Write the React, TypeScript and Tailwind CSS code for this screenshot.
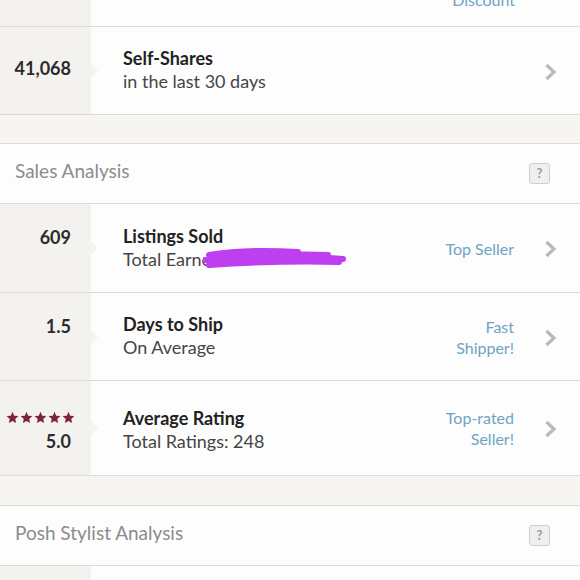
import React from 'react';

const Chevron = () => (
  <svg width="13" height="18" viewBox="0 0 13 18" className="shrink-0">
    <polyline points="2.5,2 10,9 2.5,16" fill="none" stroke="#b9b9b9" strokeWidth="3.2" strokeLinejoin="miter" />
  </svg>
);

const Star = () => (
  <svg width="13" height="13" viewBox="0 0 24 24">
    <path d="M12 1.5l3.1 7.2 7.8.7-5.9 5.2 1.8 7.7L12 18.3l-6.8 4 1.8-7.7-5.9-5.2 7.8-.7z" fill="#7d2535" />
  </svg>
);

const Help = () => (
  <div className="w-[21px] h-[21px] rounded-[3px] border border-[#cfcfcf] bg-[#efefef] flex items-center justify-center text-[13px] font-bold text-[#9a9a9a] leading-none">
    ?
  </div>
);

type RowProps = {
  left: React.ReactNode;
  title: string;
  sub: React.ReactNode;
  badge?: string[];
  h: string;
  pad?: string;
};

function StatRow({ left, title, sub, badge, h, pad = '' }: RowProps) {
  return (
    <div className={`flex bg-[#fdfdfd] border-b border-[#dedad7] ${h}`}>
      <div className="relative w-[91px] shrink-0 bg-[#f4f2ef] flex flex-col items-end justify-center pr-[20px]">
        {left}
        {/* little notch pointing into the row */}
        <div className="absolute right-[-7px] top-1/2 -translate-y-1/2 w-0 h-0 border-y-[7px] border-y-transparent border-l-[7px] border-l-[#f6f4f2]" />
      </div>
      <div className={`flex-1 flex flex-col justify-center pl-[32px] ${pad}`}>
        <p className="text-[18px] font-bold text-[#222] leading-[23px]">{title}</p>
        <div className="text-[18px] text-[#454545] leading-[23px]">{sub}</div>
      </div>
      <div className="flex items-center">
        {badge && (
          <div className="text-right text-[16px] text-[#6ea4c2] leading-[21px]">
            {badge.map((b) => (
              <p key={b}>{b}</p>
            ))}
          </div>
        )}
        <div className="pl-[30px] pr-[23px] pt-[2px]">
          <Chevron />
        </div>
      </div>
    </div>
  );
}

function SectionHeader({ label }: { label: string }) {
  return (
    <div className="h-[61px] flex items-center justify-between bg-[#fdfdfd] border-y border-[#dedad7] pl-[15px] pr-[30px]">
      <span className="text-[19px] text-[#8c8c8c] -mt-[4px]">{label}</span>
      <Help />
    </div>
  );
}

export default function App() {
  return (
    <div className="w-[580px] h-[580px] overflow-hidden bg-[#f7f5f2] font-['Lato',sans-serif]">
      {/* cut off row above */}
      <div className="flex h-[27px] bg-[#fdfdfd] border-b border-[#dedad7] overflow-hidden">
        <div className="w-[91px] bg-[#f4f2ef]" />
        <div className="flex-1" />
        <div className="pr-[65px] -mt-[11px] text-[16px] text-[#6ea4c2] leading-[21px]">Discount</div>
      </div>

      <StatRow
        h="h-[88px]"
        left={<span className="text-[18px] font-bold text-[#2b2b2b] -mt-[4px]">41,068</span>}
        title="Self-Shares"
        sub="in the last 30 days"
        pad="-mt-[2px]"
      />

      <div className="h-[28px]" />
      <SectionHeader label="Sales Analysis" />

      <StatRow
        h="h-[89px]"
        left={<span className="text-[18px] font-bold text-[#2b2b2b] -mt-[21px]">609</span>}
        title="Listings Sold"
        sub={
          <span className="relative inline-flex items-center">
            Total Earne
            <svg width="145" height="24" viewBox="0 0 145 24" className="absolute left-[80px] top-[-2px]">
              <path d="M6 9 C30 5 60 4 95 6 M2 14 C40 10 90 9 140 13 M6 19 C50 16 100 15 136 16 M10 12 C50 9 100 8 125 9" fill="none" stroke="#bd3ff0" strokeWidth="6" strokeLinecap="round" />
            </svg>
          </span>
        }
        badge={['Top Seller']}
        pad="-mt-[1px]"
      />

      <StatRow
        h="h-[88px]"
        left={<span className="text-[18px] font-bold text-[#2b2b2b] -mt-[21px]">1.5</span>}
        title="Days to Ship"
        sub="On Average"
        badge={['Fast', 'Shipper!']}
        pad="-mt-[1px]"
      />

      <StatRow
        h="h-[95px]"
        left={
          <div className="flex flex-col items-end pt-[10px]">
            <div className="flex gap-[1px] mr-[-4px]">
              <Star />
              <Star />
              <Star />
              <Star />
              <Star />
            </div>
            <span className="text-[18px] font-bold text-[#2b2b2b] mt-[4px]">5.0</span>
          </div>
        }
        title="Average Rating"
        sub="Total Ratings: 248"
        badge={['Top-rated', 'Seller!']}
        pad="pt-[4px]"
      />

      <div className="h-[29px]" />
      <SectionHeader label="Posh Stylist Analysis" />

      <div className="flex h-[40px] bg-[#fdfdfd]">
        <div className="w-[91px] bg-[#f4f2ef]" />
      </div>
    </div>
  );
}
